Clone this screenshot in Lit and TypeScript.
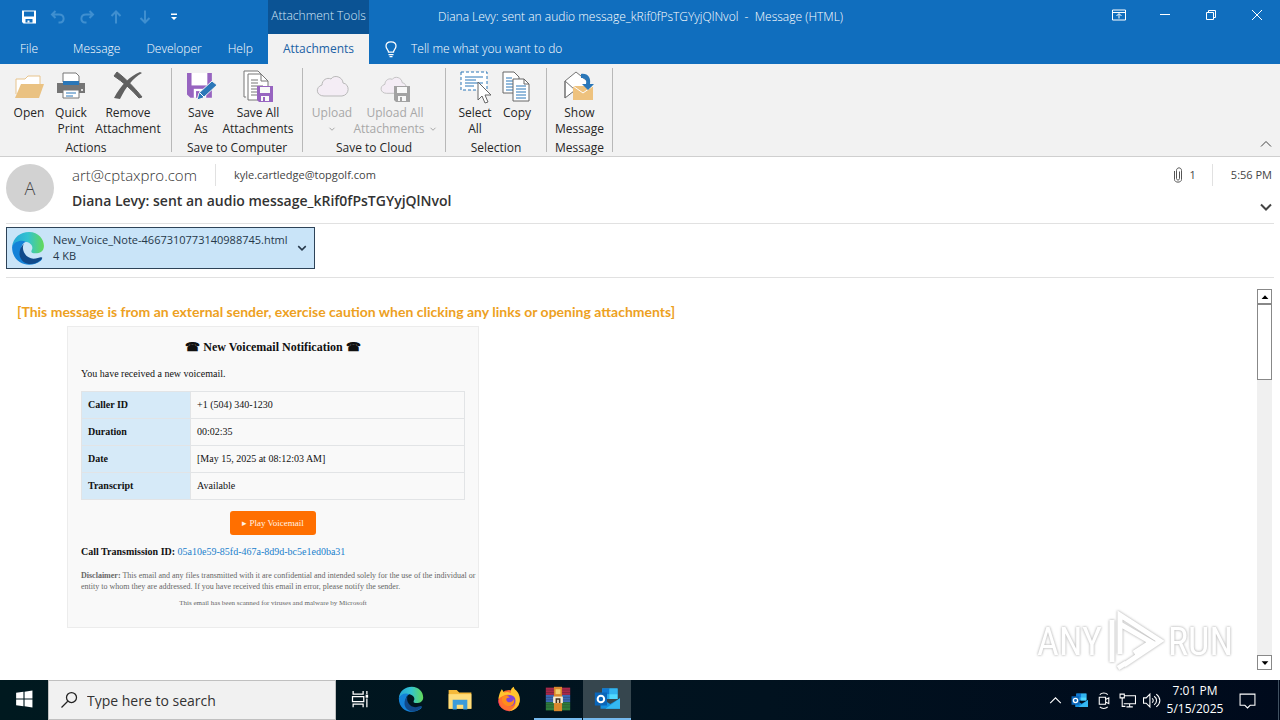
import { LitElement, html, css, svg, nothing } from "lit";
import { customElement, property } from "lit/decorators.js";
import { classMap } from "lit/directives/class-map.js";

const disk = svg`<path d="M0 0h22v22H3l-3-3z" fill="#9764c0"/><path d="M4 0h14v11H4z" fill="#fff"/><path d="M6 14h11v8H6z" fill="#fff"/><path d="M8 16h3v6H8z" fill="#9764c0"/>`;
const smallDisk = (c: string) => svg`<path d="M0 0h16v16H2l-2-2z" fill=${c}/><path d="M3 1h10v6H3z" fill="#f8f8f8"/><path d="M4 10h8v5H4z" fill="#f8f8f8"/><path d="M6 11h2v4H6z" fill=${c}/>`;
const edge = svg`
  <path d="M1 15C2 6 9 1 17 1c9 0 14 7 14 13 0 5-4 7-8 7-5 0-4-2-3-4 1-4-3-7-7-7-6 0-10 2-12 5z" fill="url(#eg)"/>
  <path d="M1 15c2-5 8-7 13-5-4 2-5 5-4 10 1 6 7 10 16 6 3-1 4 0 2 2C18 36 1 31 1 15z" fill="#1482d8"/>
  <path d="M12 12c-3 7 3 14 9 14 4 0 7-2 8-1 1 0 0 2-2 3-7 6-18 3-19-6 0-4 1-7 4-10z" fill="#114a8b"/>`;
const edgeDefs = svg`<defs><linearGradient id="eg"><stop offset="0" stop-color="#25a5d8"/><stop offset=".5" stop-color="#33c3d0"/><stop offset="1" stop-color="#63d957"/></linearGradient></defs>`;
const outlook = svg`<path d="M10 3h19v13H10z" fill="#28a8ea"/><path d="M10 3h9v7h-9z" fill="#0f78d4"/><path d="M19 10h10v6H19z" fill="#50d9ff"/><path d="M19 3h10v7H19z" fill="#32b4ef"/><path d="M8 15l12 7 12-7v13H8z" fill="#1490df"/><path d="M32 15v13H14z" fill="#35b8f1"/><path d="M1 8h15v16H1z" fill="#0a65b8"/><circle cx="8.500" cy="16" r="4" fill="none" stroke="#fff" stroke-width="2.500"/>`;
const cloud = "M8 26C0 26-1 17 6 15c0-5 5-8 9-6 3-5 12-2 12 4 7 1 7 12-1 13z";

const icons: Record<string, unknown> = {
  open: svg`<path d="M3 24V9h9l3-3h12v12" fill="#fff" stroke="#e8c48c"/><path d="M8 14h23l-5 14H2z" fill="#eac282"/>`,
  print: svg`<path d="M8 12V3h13l3 3v7" fill="#fff" stroke="#777"/><path d="M2 13h28v10H2z" fill="#757575"/><path d="M8 11h16v4H8z" fill="#2b77b8"/><path d="M8 20h16v8H8z" fill="#fff" stroke="#777"/><path d="M11 23h10M11 26h7" stroke="#2b77b8"/><circle cx="27" cy="20" r="1" fill="#fff"/>`,
  remove: svg`<path d="M5 2c8 6 17 15 25 25l-3 1C19 19 11 12 2 6z" fill="#606060" stroke="#606060"/><path d="M30 3C21 8 14 17 8 29l-6-1C9 15 18 6 28 2z" fill="#606060"/>`,
  saveas: svg`<g transform="translate(2 3) scale(1.130)">${disk}</g><path d="M12 30l2-7 13-12 5 4-14 13z" fill="#2b77b8" stroke="#f2f2f2"/><path d="M15 23l4 4" stroke="#fff"/>`,
  saveall: svg`<path d="M4 27H2V1h14l3 3" fill="#fff" stroke="#777"/><path d="M6 30V4h13l7 7v19z" fill="#fff" stroke="#777"/><path d="M19 4v7h7M9 10h7M9 13h7M9 16h12M9 19h7M9 22h7M9 25h7" fill="none" stroke="#777"/><g transform="translate(15 16)">${smallDisk("#9764c0")}</g>`,
  upload: svg`<path d=${cloud} fill="#f4edf5" stroke="#b9b9b9"/>`,
  uploadall: svg`<path d=${cloud} fill="#f4edf5" stroke="#b9b9b9" transform="translate(1 2) scale(.82)"/><g transform="translate(15 16)">${smallDisk("#a2a2a2")}</g>`,
  select: svg`<path d="M2 2h26v18H2z" fill="#fff" stroke="#2b77b8" stroke-dasharray="3 2"/><path d="M6 7h18M6 10h11M6 13h18M6 16h9" stroke="#2b77b8"/><path d="M19 12v18l4-4 3 7 3-1-3-7h6z" fill="#fff" stroke="#666"/>`,
  copy: svg`<path d="M2 2h11l5 5v16H2z" fill="#fff" stroke="#666"/><path d="M5 8h6M5 11h10M5 14h10M5 17h10M5 20h10" stroke="#2b77b8"/><path d="M12 9h11l5 5v17H12z" fill="#fff" stroke="#666"/><path d="M23 9v5h5" fill="none" stroke="#666"/><path d="M15 16h10M15 19h10M15 22h10M15 25h10M15 28h10" stroke="#2b77b8"/>`,
  show: svg`<path d="M2 11v17l9-7" fill="#fff" stroke="#666"/><path d="M3 11l10-8 11 9v8H12z" fill="#fff"/><path d="M2 28V11L13 2l10 8M2 11l9 8" fill="none" stroke="#777"/><path d="M10 16h20v14H10z" fill="#eec27e"/><path d="M10 16l10 7 10-7" fill="none" stroke="#fff"/><path d="M18 4c7-1 10 4 9 10h4l-6 6-6-6h4c1-4-1-6-5-6z" fill="#2b77b8"/>`,
  edge: svg`${edgeDefs}${edge}`,
  outlook,
  save: svg`<path d="M2 3h28v26H5l-3-3z" fill="#fff"/><path d="M6 5h20v10H6z" fill="#106ebe"/><path d="M9 20h14v7H9z" fill="#106ebe"/><path d="M13 23h4v4h-4z" fill="#fff"/>`,
  undo: svg`<path d="M11 4l-7 7 7 7M4 11h14c12 0 12 16 2 16h-3" fill="none" stroke="currentColor" stroke-width="4"/>`,
  redo: svg`<path d="M21 4l7 7-7 7M28 11H14C2 11 2 27 12 27h3" fill="none" stroke="currentColor" stroke-width="4"/>`,
  up: svg`<path d="M16 29V5M7 14l9-9 9 9" fill="none" stroke="currentColor" stroke-width="4"/>`,
  down: svg`<path d="M16 3v24M7 18l9 9 9-9" fill="none" stroke="currentColor" stroke-width="4"/>`,
  custom: svg`<path d="M10 9h12v3H10zM10 16h12l-6 6z" fill="#fff"/>`,
  bulb: svg`<path d="M11 22c0-4-5-6-5-12C6-1 26-1 26 10c0 6-5 8-5 12zM11 27h10M13 31h6" fill="none" stroke="#fff" stroke-width="2.500"/>`,
  ribbonopt: svg`<path d="M3 6h26v20H3zM3 11h26M16 23v-9M11 18l5-5 5 5" fill="none" stroke="#fff" stroke-width="2"/>`,
  min: svg`<path d="M6 15h20" stroke="#fff" stroke-width="2"/>`,
  restore: svg`<path d="M7 11h14v14H7zM11 11V7h14v14h-4" fill="none" stroke="#fff" stroke-width="2"/>`,
  close: svg`<path d="M6 6l20 20M26 6L6 26" stroke="#fff" stroke-width="2"/>`,
  chevup: svg`<path d="M6 21l10-10 10 10" fill="none" stroke="currentColor" stroke-width="2"/>`,
  chevdown: svg`<path d="M6 11l10 10 10-10" fill="none" stroke="currentColor" stroke-width="4"/>`,
  triup: svg`<path d="M7 21h18l-9-10z" fill="#000"/>`,
  tridown: svg`<path d="M7 11h18l-9 10z" fill="#000"/>`,
  clip: svg`<path d="M9 8v17c0 7 14 7 14 0V7c0-7-10-7-10 0v16c0 4 6 4 6 0V9" fill="none" stroke="#555" stroke-width="2"/>`,
  windows: svg`<path d="M2 5l13-2v12H2zM17 3l14-2v14H17zM2 17h13v12L2 27zM17 17h14v14l-14-2z" fill="#fff"/>`,
  search: svg`<circle cx="20" cy="12" r="8" fill="none" stroke="#222" stroke-width="2"/><path d="M14 18L4 28" stroke="#222" stroke-width="2"/>`,
  taskview: svg`<path d="M5 3v5h16V3M5 29v-5h16v5M4 12h18v8H4zM27 3v5M27 15v14" fill="none" stroke="#fff" stroke-width="2"/><path d="M25 9h4v5h-4z" fill="#fff"/>`,
  folder: svg`<path d="M2 5h10l3 3h15v20H2z" fill="#f5b93a"/><path d="M2 10h28v18H2z" fill="#ffdd7b"/><path d="M7 17h18v12h-5v-6h-8v6H7z" fill="#3c9bd9"/>`,
  firefox: svg`<circle cx="16" cy="18" r="13" fill="#ff7130"/><path d="M3 16C4 9 6 6 7 4c2 2 2 3 3 4 3-1 6-1 8 1 0-4 1-7 4-8 0 4 4 4 6 9 4 9-1 20-12 21 8-4 10-9 6-16C17 8 9 11 3 16z" fill="#ffc42e"/><path d="M3 15c1 12 8 17 16 15C9 31 1 25 3 15z" fill="#f3296c"/><circle cx="17" cy="18" r="7" fill="#8045d6"/><path d="M8 13c3-2 7-1 9 1-4 0-5 2-4 4 3 4 8 1 9-2 2 7-5 11-10 8-4-2-6-7-4-11z" fill="#fe8d1b"/>`,
  winrar: svg`<path d="M1 2h30v9H1z" fill="#a8284a"/><path d="M1 11h30v9H1z" fill="#3b69b5"/><path d="M1 20h30v10H1z" fill="#2e7d3c"/><path d="M1 5h30M1 8h30M1 14h30M1 17h30M1 23h30M1 26h30" stroke="#222" opacity=".35"/><path d="M11 1h10v30H11z" fill="#d9882c"/><path d="M13 4h6v6h-6z" fill="#f3cf6d"/><path d="M10 13h12v8H10z" fill="#f6ecd0"/><path d="M14 21v-5h4v5" fill="none" stroke="#432" stroke-width="2"/>`,
  camera: svg`<path d="M8 10h12v13H8zM20 14l6-3v11l-6-3M9 5c4-4 11-4 15 0M9 28c4 4 11 4 15 0" fill="none" stroke="#fff" stroke-width="2"/>`,
  network: svg`<path d="M9 7h22v15H9M20 22v6M14 28h12M2 4h8v7H2zM6 11v16h6" fill="none" stroke="#fff" stroke-width="2"/>`,
  sound: svg`<path d="M1 11h5l7-7v24l-7-7H1zM17 12c3 2 3 6 0 8M21 8c6 4 6 12 0 16M25 4c9 7 9 17 0 24" fill="none" stroke="#fff" stroke-width="2"/>`,
  notify: svg`<path d="M2 4h28v21h-9l-5 5-5-5H2z" fill="none" stroke="#fff" stroke-width="2"/>`,
};

@customElement("ui-icon")
export class UiIcon extends LitElement {
  @property() name = "";
  static styles = css`
    :host { display: inline-flex; flex: none; width: 16px; height: 16px; }
    .art { width: 100%; height: 100%; display: block; overflow: visible; }
  `;
  render() {
    return html`<svg class="art" viewBox="0 0 32 32" aria-hidden="true">${icons[this.name] ?? nothing}</svg>`;
  }
}

interface Tool { icon: string; lines: string[]; menu?: boolean; disabled?: boolean; wide?: boolean }
interface Group { label: string; tools: Tool[] }

const groups: Group[] = [
  { label: "Actions", tools: [
    { icon: "open", lines: ["Open"] },
    { icon: "print", lines: ["Quick", "Print"] },
    { icon: "remove", lines: ["Remove", "Attachment"], wide: true } ] },
  { label: "Save to Computer", tools: [
    { icon: "saveas", lines: ["Save", "As"] },
    { icon: "saveall", lines: ["Save All", "Attachments"], wide: true } ] },
  { label: "Save to Cloud", tools: [
    { icon: "upload", lines: ["Upload", ""], menu: true, disabled: true },
    { icon: "uploadall", lines: ["Upload All", "Attachments"], menu: true, disabled: true, wide: true } ] },
  { label: "Selection", tools: [
    { icon: "select", lines: ["Select", "All"] },
    { icon: "copy", lines: ["Copy"] } ] },
  { label: "Message", tools: [{ icon: "show", lines: ["Show", "Message"] }] },
];

@customElement("ribbon-bar")
export class RibbonBar extends LitElement {
  static styles = css`
    :host { display: flex; flex: none; background: #f2f2f2; border-bottom: 1px solid #cfcfcf; padding: 4px 0; height: 84px; }
    .group { display: flex; flex-direction: column; align-items: center; gap: 3px; padding: 2px 8px 0; border-right: 1px solid #b8b8b8; }
    .group:first-child { padding-right: 7px; }
    .tools { display: flex; height: 67px; }
    .tool { font: inherit; color: #262626; background: none; border: 0; padding: 0; display: flex; flex-direction: column; align-items: center; gap: 3px; min-width: 42px; }
    .wide { min-width: 72px; }
    .menu.wide { min-width: 84px; }
    .tool:disabled { color: #a8a8a8; }
    .pic { width: 32px; height: 32px; }
    .line { display: flex; align-items: center; justify-content: center; gap: 4px; height: 16px; white-space: nowrap; }
    .arrow { width: 8px; height: 8px; }
    .label { line-height: 16px; color: #262626; white-space: nowrap; }
    .fill { flex: 1; }
    .collapse { align-self: flex-end; border: 0; background: none; color: #444; padding: 0 6px 0 0; height: 16px; }
  `;
  render() {
    return html`
      ${groups.map((g) => html`
        <div class="group" role="group" aria-label=${g.label}>
          <div class="tools">
            ${g.tools.map((t) => html`
              <button class=${classMap({ tool: true, wide: !!t.wide, menu: !!t.menu })} ?disabled=${t.disabled}>
                <ui-icon class="pic" name=${t.icon}></ui-icon>
                <span>${t.lines.map((l, i) => html`
                  <span class="line">${l}${t.menu && i === 1 ? html`<ui-icon class="arrow" name="chevdown"></ui-icon>` : nothing}</span>`)}
                </span>
              </button>`)}
          </div>
          <div class="label">${g.label}</div>
        </div>`)}
      <div class="fill"></div>
      <button class="collapse" aria-label="Collapse the ribbon"><ui-icon name="chevup"></ui-icon></button>
    `;
  }
}

@customElement("title-bar")
export class TitleBar extends LitElement {
  static styles = css`
    :host { display: flex; flex: none; background: #106ebe; color: #fff; font-weight: 300; }
    button { font: inherit; color: inherit; background: none; border: 0; padding: 0; display: inline-flex; align-items: center; white-space: nowrap; }
    .left { width: 268px; flex: none; }
    .quick { height: 34px; display: flex; align-items: center; gap: 13px; padding-left: 21px; }
    .faded { color: #3f8fd0; }
    .tabs { height: 30px; display: flex; align-items: center; gap: 26px; padding-left: 20px; }
    .file { padding-right: 9px; }
    .context { width: 101px; flex: none; text-align: center; }
    .caption { height: 34px; line-height: 32px; background: #0b5394; color: #d5e8f8; }
    .active { width: 100%; height: 30px; background: #f2f2f2; color: #1c62a5; justify-content: center; font-weight: 400; }
    .right { flex: 1; min-width: 0; }
    .top { height: 34px; display: flex; align-items: center; }
    .title { flex: 1; padding-left: 69px; white-space: pre; overflow: hidden; text-overflow: ellipsis; }
    .win { display: flex; gap: 30px; padding-right: 15px; padding-bottom: 4px; }
    .tell { height: 30px; gap: 12px; padding-left: 14px; }
  `;
  render() {
    return html`
      <div class="left">
        <div class="quick">
          <button aria-label="Save"><ui-icon name="save"></ui-icon></button>
          <button class="faded" aria-label="Undo"><ui-icon name="undo"></ui-icon></button>
          <button class="faded" aria-label="Redo"><ui-icon name="redo"></ui-icon></button>
          <button class="faded" aria-label="Previous"><ui-icon name="up"></ui-icon></button>
          <button class="faded" aria-label="Next"><ui-icon name="down"></ui-icon></button>
          <button aria-label="Customize"><ui-icon name="custom"></ui-icon></button>
        </div>
        <div class="tabs">
          <button class="file">File</button><button>Message</button><button>Developer</button><button>Help</button>
        </div>
      </div>
      <div class="context">
        <div class="caption">Attachment Tools</div>
        <button class="active">Attachments</button>
      </div>
      <div class="right">
        <div class="top">
          <div class="title">Diana Levy: sent an audio message_kRif0fPsTGYyjQlNvol  -  Message (HTML)</div>
          <div class="win">
            <button aria-label="Ribbon options"><ui-icon name="ribbonopt"></ui-icon></button>
            <button aria-label="Minimize"><ui-icon name="min"></ui-icon></button>
            <button aria-label="Restore"><ui-icon name="restore"></ui-icon></button>
            <button aria-label="Close"><ui-icon name="close"></ui-icon></button>
          </div>
        </div>
        <button class="tell"><ui-icon name="bulb"></ui-icon>Tell me what you want to do</button>
      </div>
    `;
  }
}

@customElement("message-header")
export class MessageHeader extends LitElement {
  static styles = css`
    :host { display: block; flex: none; padding: 0 6px; color: #444; }
    button { font: inherit; color: inherit; background: none; border: 0; padding: 0; text-align: left; }
    .head { display: flex; height: 66px; border-bottom: 1px solid #e1e1e1; }
    .avatar { width: 48px; height: 48px; margin: 7px 18px 0 0; border-radius: 50%; background: #d2d2d2; font-size: 18px; font-weight: 300; display: flex; align-items: center; justify-content: center; }
    .who { flex: 1; min-width: 0; padding-top: 7px; }
    .people { display: flex; height: 22px; align-items: center; }
    .from { font-size: 15px; font-weight: 300; padding-right: 18px; border-right: 1px solid #e1e1e1; line-height: 22px; color: #333; }
    .to { font-size: 11px; padding-left: 18px; }
    .subject { margin: 4px 0 0; font-size: 14px; line-height: 22px; font-weight: 600; color: #333; }
    .side { display: flex; flex-direction: column; align-items: flex-end; justify-content: space-between; padding: 7px 0 4px; font-size: 11px; }
    .meta { display: flex; align-items: center; height: 22px; gap: 4px; padding-right: 2px; }
    .time { border-left: 1px solid #e1e1e1; padding-left: 18px; margin-left: 12px; line-height: 22px; }
    .files { border-bottom: 1px solid #e1e1e1; padding-top: 3px; height: 50px; }
    .file { box-sizing: border-box; height: 42px; border: 1px solid #2d4358; background: #c9e4f8; display: inline-flex; align-items: center; gap: 8px; padding: 0 6px 0 4px; color: #26384a; font-size: 11px; }
    .logo { width: 34px; height: 34px; }
    .desc { line-height: 16px; }
    .name { display: block; min-width: 234px; }
    .drop { width: 12px; height: 12px; }
  `;
  render() {
    return html`
      <div class="head">
        <div class="avatar">A</div>
        <div class="who">
          <div class="people"><span class="from">art@cptaxpro.com</span><span class="to">kyle.cartledge@topgolf.com</span></div>
          <h1 class="subject">Diana Levy: sent an audio message_kRif0fPsTGYyjQlNvol</h1>
        </div>
        <div class="side">
          <div class="meta"><ui-icon name="clip"></ui-icon><span>1</span><span class="time">5:56 PM</span></div>
          <button aria-label="Expand header"><ui-icon name="chevdown"></ui-icon></button>
        </div>
      </div>
      <div class="files">
        <button class="file">
          <ui-icon class="logo" name="edge"></ui-icon>
          <span class="desc"><span class="name">New_Voice_Note-4667310773140988745.html</span>4 KB</span>
          <ui-icon class="drop" name="chevdown"></ui-icon>
        </button>
      </div>
    `;
  }
}

const details = [
  ["Caller ID", "+1 (504) 340-1230"],
  ["Duration", "00:02:35"],
  ["Date", "[May 15, 2025 at 08:12:03 AM]"],
  ["Transcript", "Available"],
];

@customElement("message-body")
export class MessageBody extends LitElement {
  static styles = css`
    :host { display: flex; flex: 1; min-height: 0; padding: 11px 8px 10px 17px; position: relative; }
    .scroll { flex: 1; min-width: 0; overflow: hidden; padding-top: 13px; }
    .warn { margin: 0 0 5px; font: 700 14px/19px Lato, sans-serif; color: #eda11f; }
    .card { box-sizing: border-box; width: 412px; margin-left: 50px; padding: 12px 13px; border: 1px solid #ececec; background: #f9f9f9; color: #111; font: 10px/14px "Liberation Serif", serif; }
    .head { margin: 0; text-align: center; font-size: 12px; line-height: 16px; }
    .intro { margin: 12px 0 10px; }
    .grid { width: 100%; border-collapse: collapse; }
    .grid th, .grid td { height: 14px; border: 1px solid #e2e4e6; padding: 6px; text-align: left; }
    .grid th { width: 96px; background: #d6eaf8; }
    .act { display: flex; justify-content: center; margin: 11px 0 10px; }
    .play { padding: 0 12px; border-radius: 3px; background: #ff6f00; color: #fff3e6; font-size: 9px; line-height: 24px; text-decoration: none; }
    .ident { margin: 0 0 11px; }
    .ident a { color: #2080cc; text-decoration: none; }
    .small { margin: 0 0 6px; font-size: 8px; line-height: 11px; color: #666; white-space: nowrap; }
    .foot { margin: 0; padding-bottom: 6px; font-size: 7px; line-height: 11px; color: #666; text-align: center; }
    .bar { width: 15px; flex: none; display: flex; flex-direction: column; background: #f0f0f0; }
    .bar button { box-sizing: border-box; height: 15px; width: 15px; padding: 0; border: 1px solid #888; background: #fff; display: flex; align-items: center; justify-content: center; }
    .tri { width: 12px; height: 12px; }
    .thumb { box-sizing: border-box; height: 20%; border: 1px solid #888; background: #fff; }
    .gap { flex: 1; }
    .mark { position: absolute; right: 47px; bottom: 6px; display: flex; align-items: center; gap: 4px; color: #fff; font: 400 38px/64px "Roboto Condensed", "Open Sans Condensed", "Liberation Sans Narrow", "Liberation Sans", sans-serif; filter: drop-shadow(0 0 1px #bbb) drop-shadow(0 0 1px #ddd); }
    .logo { width: 58px; height: 64px; }
  `;
  render() {
    return html`
      <div class="scroll">
        <p class="warn">[This message is from an external sender, exercise caution when clicking any links or opening attachments]</p>
        <section class="card">
          <h2 class="head">☎ New Voicemail Notification ☎</h2>
          <p class="intro">You have received a new voicemail.</p>
          <table class="grid">
            ${details.map(([k, v]) => html`<tr><th scope="row">${k}</th><td>${v}</td></tr>`)}
          </table>
          <div class="act"><a class="play" href="#">▸ Play Voicemail</a></div>
          <p class="ident"><b>Call Transmission ID:</b> <a href="#">05a10e59-85fd-467a-8d9d-bc5e1ed0ba31</a></p>
          <p class="small"><b>Disclaimer:</b> This email and any files transmitted with it are confidential and intended solely for the use of the individual or<br />entity to whom they are addressed. If you have received this email in error, please notify the sender.</p>
          <p class="foot">This email has been scanned for viruses and malware by Microsoft</p>
        </section>
      </div>
      <div class="bar">
        <button aria-label="Scroll up"><ui-icon class="tri" name="triup"></ui-icon></button>
        <div class="thumb"></div>
        <div class="gap"></div>
        <button aria-label="Scroll down"><ui-icon class="tri" name="tridown"></ui-icon></button>
      </div>
      <div class="mark">
        <span>ANY</span>
        <svg class="logo" viewBox="0 0 58 64" aria-hidden="true"><path d="M14 44V5l40 26-36 24M14 14l31 18-17 11M6 52V10M14 44V22M12 58l8-5" fill="none" stroke="#fff" stroke-width="5"/></svg>
        <span>RUN</span>
      </div>
    `;
  }
}

@customElement("task-bar")
export class TaskBar extends LitElement {
  static styles = css`
    :host { display: flex; flex: none; height: 40px; background: linear-gradient(90deg, #00191f, #01121f 60%, #000a1c); color: #fff; }
    button { font: inherit; color: inherit; background: none; border: 0; padding: 0; display: flex; align-items: center; justify-content: center; }
    .start, .app { width: 48px; box-sizing: border-box; border-bottom: 2px solid transparent; }
    .apps { display: flex; gap: 1px; padding-left: 3px; }
    .running { border-color: #76b9ed; }
    .current { background: #36464e; }
    .search { box-sizing: border-box; width: 288px; background: #f1f1f1; border: 1px solid #c0c0c0; display: flex; align-items: center; gap: 8px; padding-left: 10px; }
    .box { flex: 1; min-width: 0; border: 0; outline: 0; padding: 2px 0 0; background: none; font: inherit; font-size: 14px; color: #333; }
    .box::placeholder { color: #333; opacity: 1; }
    .start ui-icon { width: 18px; height: 18px; }
    .find { width: 20px; height: 20px; }
    .big { width: 26px; height: 26px; }
    .view { width: 20px; height: 20px; }
    .fill { flex: 1; }
    .tray { width: 24px; }
    .tray ui-icon { width: 17px; height: 17px; }
    .clock { width: 64px; text-align: center; line-height: 18px; white-space: pre-line; }
    .note { width: 41px; margin-right: 10px; }
    .note ui-icon { width: 17px; height: 17px; }
    .desk { width: 1px; border-left: 1px solid #405060; }
  `;
  render() {
    const apps: [string, string, string][] = [
      ["edge", "Edge", ""], ["folder", "File Explorer", ""], ["firefox", "Firefox", ""],
      ["winrar", "WinRAR", "running"], ["outlook", "Outlook", "running current"],
    ];
    return html`
      <button class="start" aria-label="Start"><ui-icon name="windows"></ui-icon></button>
      <label class="search"><ui-icon class="find" name="search"></ui-icon><input class="box" type="text" placeholder="Type here to search" aria-label="Type here to search" /></label>
      <button class="app" aria-label="Task View"><ui-icon class="view" name="taskview"></ui-icon></button>
      <div class="apps">${apps.map(([icon, label, state]) => html`<button class="app ${state}" aria-label=${label}><ui-icon class="big" name=${icon}></ui-icon></button>`)}</div>
      <div class="fill"></div>
      ${["chevup", "outlook", "camera", "network", "sound"].map((n) => html`<button class="tray" aria-label=${n}><ui-icon name=${n}></ui-icon></button>`)}
      <button class="clock">7:01 PM
5/15/2025</button>
      <button class="note" aria-label="Notifications"><ui-icon name="notify"></ui-icon></button>
      <div class="desk"></div>
    `;
  }
}

@customElement("app-root")
export class AppRoot extends LitElement {
  static styles = css`
    :host { display: flex; flex-direction: column; height: 100vh; overflow: hidden; background: #fff; font: 12px/16px "Open Sans", "Noto Sans", sans-serif; }
  `;
  render() {
    return html`
      <title-bar></title-bar>
      <ribbon-bar></ribbon-bar>
      <message-header></message-header>
      <message-body></message-body>
      <task-bar></task-bar>
    `;
  }
}
